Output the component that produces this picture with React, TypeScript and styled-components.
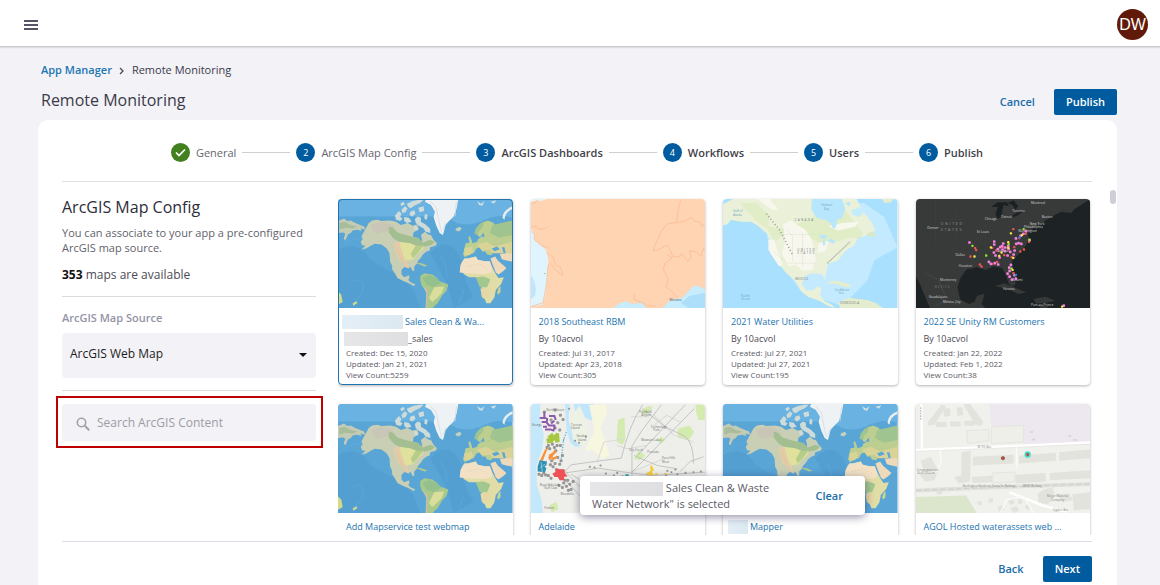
import React from "react";
import styled, { createGlobalStyle, css } from "styled-components";

const GlobalStyle = createGlobalStyle`
  * { box-sizing: border-box; }
  body {
    margin: 0;
    background: #f3f2f7;
    color: #3b3a4a;
    font-family: "Open Sans", "Noto Sans", sans-serif;
    font-size: 11px;
  }
  button, input, select { font: inherit; }
  h1, h2, h3, p { margin: 0; }
`;

const Shell = styled.div`
  display: flex;
  flex-direction: column;
  height: 100vh;
  overflow: hidden;
`;

const TopBar = styled.header`
  display: flex;
  align-items: center;
  justify-content: space-between;
  flex: none;
  height: 47px;
  padding: 2px 12px 0 24px;
  background: #fff;
  border-bottom: 1px solid #c9c9cc;
  box-shadow: 0 1px 1px #dddde2;
`;

const MenuButton = styled.button`
  display: flex;
  padding: 0;
  border: 0;
  background: none;
  color: #1f1d33;
`;

const Avatar = styled.button`
  width: 31px;
  height: 31px;
  padding: 0;
  border: 0;
  border-radius: 50%;
  background: #611a09;
  color: #fff;
  font-family: "Liberation Sans", sans-serif;
  font-size: 16px;
  line-height: 31px;
`;

const PageHead = styled.div`
  display: flex;
  align-items: flex-end;
  justify-content: space-between;
  flex: none;
  padding: 15px 43px 5px 41px;
`;

const Breadcrumb = styled.nav`
  display: flex;
  align-items: center;
  gap: 7px;
  line-height: 16px;
  font-weight: 500;
`;

const CrumbLink = styled.a`
  color: #1b76b3;
  font-weight: 600;
  text-decoration: none;
`;

const PageTitle = styled.h1`
  margin: 10px 0 3px;
  font-size: 16px;
  line-height: 24px;
  font-weight: 500;
`;

const Actions = styled.div`
  display: flex;
  align-items: center;
  gap: 18px;
`;

const Button = styled.button<{ $primary?: boolean }>`
  height: 26px;
  padding: 0 11px 1px;
  border: 1px solid transparent;
  border-radius: 2px;
  background: none;
  color: #1b6ea8;
  font-weight: 600;
  ${(p) =>
    p.$primary
      ? css`
          background: #005c9f;
          color: #fff;
        `
      : css`
          padding: 0 0 1px;
        `}
`;

const Panel = styled.main`
  display: flex;
  flex-direction: column;
  flex: 1;
  min-height: 0;
  margin: 0 43px 0 38px;
  padding: 0 25px 0 24px;
  background: #fff;
  border-radius: 10px 10px 0 0;
`;

const Stepper = styled.ol`
  display: flex;
  align-items: center;
  justify-content: center;
  flex: none;
  gap: 6px;
  height: 62px;
  margin: 0;
  padding: 4px 0 0;
  list-style: none;
  border-bottom: 1px solid #dedee3;
`;

const Step = styled.li<{ $strong?: boolean }>`
  display: flex;
  align-items: center;
  gap: 6px;
  color: ${(p) => (p.$strong ? "#3f3f48" : "#66666e")};
  font-weight: ${(p) => (p.$strong ? 600 : 400)};

  &:not(:last-child)::after {
    content: "";
    width: 48px;
    height: 1px;
    background: #cfcfcf;
  }
`;

const Bubble = styled.span<{ $done?: boolean }>`
  display: flex;
  align-items: center;
  justify-content: center;
  width: 19px;
  height: 19px;
  border-radius: 50%;
  background: ${(p) => (p.$done ? "#43801f" : "#005c9f")};
  color: #fff;
  font-size: 9px;
  font-weight: 500;
`;

const Body = styled.div`
  position: relative;
  display: flex;
  flex: 1;
  min-height: 0;
  gap: 22px;
`;

const Sidebar = styled.section`
  flex: none;
  width: 254px;
  padding-top: 13px;
`;

const SideTitle = styled.h2`
  font-size: 16px;
  line-height: 24px;
  font-weight: 500;
  color: #2e2d3a;
`;

const SideText = styled.p`
  margin-top: 6px;
  line-height: 15px;
  color: #63626c;
`;

const Count = styled.p`
  margin-top: 11px;
  font-size: 12px;
  line-height: 18px;
  color: #4c4b55;

  strong { color: #111; font-weight: 700; }
`;

const Rule = styled.hr`
  height: 1px;
  margin: 12px 0;
  border: 0;
  background: #dcdce0;
`;

const FieldLabel = styled.label`
  display: block;
  margin-bottom: 6px;
  line-height: 18px;
  font-weight: 600;
  color: #9493a5;
`;

const SelectBox = styled.div`
  position: relative;

  svg {
    position: absolute;
    top: 20px;
    right: 9px;
    pointer-events: none;
  }
`;

const Select = styled.select`
  display: block;
  width: 100%;
  height: 45px;
  padding: 0 8px 4px;
  border: 0;
  border-radius: 4px;
  appearance: none;
  background: #f3f2f7;
  color: #1d1c22;
  font-size: 12px;
`;

const Highlight = styled.div`
  margin: -7px -7px 0 -6px;
  padding: 6px 5px 5px 4px;
  border: 2px solid #bd0000;
`;

const SearchBox = styled.label`
  display: flex;
  align-items: center;
  gap: 7px;
  height: 37px;
  padding: 0 14px;
  border-radius: 4px;
  background: #f3f2f7;

  svg { margin-top: 3px; flex: none; }
`;

const SearchInput = styled.input`
  flex: 1;
  min-width: 0;
  padding: 0;
  border: 0;
  background: none;
  font-size: 12px;

  &::placeholder { color: #9d9ca4; opacity: 1; }
`;

const Gallery = styled.div`
  flex: 1;
  min-width: 0;
  margin-bottom: 6px;
  padding: 17px 2px 0 0;
  overflow: hidden;
`;

const Grid = styled.div`
  display: grid;
  grid-template-columns: repeat(4, minmax(0, 1fr));
  gap: 19px 18px;
`;

const Card = styled.article<{ $selected?: boolean }>`
  overflow: hidden;
  border-radius: 4px;
  background: #fff;
  box-shadow: 0 1px 3px rgba(0, 0, 0, 0.3);
  outline: ${(p) => (p.$selected ? "1px solid #1f74b0" : "none")};
  outline-offset: -1px;

  > svg { display: block; width: 100%; height: 109px; }
`;

const CardText = styled.div`
  min-height: 77px;
  padding: 5px 8px 4px;
`;

const CardTitle = styled.h3`
  display: flex;
  align-items: center;
  gap: 2px;
  font-size: 9px;
  line-height: 17px;
  font-weight: 500;
  white-space: nowrap;

  a { color: #2274b0; text-decoration: none; }
`;

const Owner = styled.p`
  display: flex;
  align-items: center;
  font-size: 9px;
  line-height: 17px;
  color: #4b4a55;
`;

const Meta = styled.p`
  font-size: 8px;
  line-height: 11px;
  color: #5c5b66;
`;

const Redaction = styled.span<{ $width: number; $tone: "blue" | "grey"; $bleed?: number }>`
  flex: none;
  display: inline-block;
  width: ${(p) => p.$width}px;
  height: 14px;
  margin-left: ${(p) => -(p.$bleed ?? 0)}px;
  vertical-align: middle;
  background: ${(p) =>
    p.$tone === "blue"
      ? "linear-gradient(90deg, #e4eef6, #dce9f1)"
      : "linear-gradient(90deg, #e6e5e7, #dfdee1)"};
`;

const ScrollThumb = styled.div`
  position: absolute;
  top: 8px;
  right: -24px;
  width: 6px;
  height: 14px;
  border-radius: 3px;
  background: #cfced6;
`;

const Footer = styled.footer`
  display: flex;
  align-items: center;
  justify-content: flex-end;
  flex: none;
  gap: 18px;
  height: 44px;
  padding-top: 11px;
  border-top: 1px solid #dcdce8;
`;

const Toast = styled.div`
  position: absolute;
  right: 227px;
  bottom: 26px;
  display: flex;
  align-items: center;
  justify-content: space-between;
  width: 285px;
  height: 39px;
  padding: 0 21px 0 10px;
  border-radius: 4px;
  background: #fff;
  box-shadow: 0 2px 8px rgba(40, 35, 80, 0.5);
  color: #5b5a66;
  line-height: 15px;
`;

const ToastLine = styled.span`
  display: block;
  padding-left: 2px;
`;

type MapProps = { label: string };

/* Physical world map: oceans, continents with vegetation and desert tones. */
const WorldMap = ({ label }: MapProps) => (
  <svg viewBox="24 28 522 326" preserveAspectRatio="xMidYMid slice" role="img" aria-label={label}>
    <rect x="24" y="28" width="522" height="326" fill="#58a5d6" />
    <path d="M24 28H546V84Q500 70 450 96 390 118 350 80H24Z" fill="#69b2e2" />
    <path d="M24 180Q90 150 120 210 170 240 210 260L250 300 270 354H24Z" fill="#539fd2" />
    <path d="M300 190Q360 130 392 210 400 280 430 320L370 354 350 280Z" fill="#539fd2" />
    <path d="M24 178Q60 140 112 145M60 280Q110 250 96 310L70 340M330 200Q350 220 350 262M400 300L385 345" fill="none" stroke="#70b2df" strokeWidth="2" opacity=".6" />
    <path d="M24 94l18-8 10 8 10-2 14 8 26 10 4 10-14-4 2 8-12-4-14 2-6 8-8 4-8 18-5-6 5-14-6-4-16 2Z" fill="#c3cbb4" />
    <path d="M28 100l16-4 18 10 20 4-14 6-22-2-18 6Z" fill="#a9bd9c" />
    <path d="M116 100l10-8 16-2 12 4 26-2 18 4 14 10 20-6 16 8 12-4 6 14-16 10-2 12 16 8 4 10 8-6-4-16 12-10 10 8 8 2 8 14 10 10-4 8-16 4-2 10-10 4-10 8-6 10-8 8-4 10-8 8 0 14-6-2-4-10-20 0-8 8 0 14 8 8 14-6 2 8-4 6 8 8 14 6-6 4-14-8-20-8-14-8-8-14-8-12 0-10-6-12-2-26-8-14-16-12-20-2-12 6-14 8-14 4 12-12-10-2-4-10 6-8-4-8Z" fill="#c9cfb4" />
    <path d="M124 104l30-8 28 6 14 14-6 14-24-4-26 6-12-10Z" fill="#c9c6b8" />
    <path d="M176 110l12 4 14 14 32 10 30 6 14 14 22-8 14 6-12 10-30 6-40-10-22-4-20-12-14-18Z" fill="#a3bf92" />
    <path d="M206 156l34 4 24 10 16-2-2 10-18 16-10 14-20 4-16 4-4-20-8-20Z" fill="#dfe19c" />
    <path d="M256 168l24 0-18 22-14 16-6-14Z" fill="#b5cd88" />
    <path d="M190 158l18-2 4 18 8 24 10 20 8 18-8-2-14-18-14-12-8-24Z" fill="#e3cba8" />
    <path d="M194 78l12-14 8 8-4 10 8 4-8 8-12-4Z M214 60l10-10 8 6-6 12-10 2Z M230 42l18-8 20-4 12 0-10 10-18 8-10 8-8-4Z M240 66l12-4 4 10-10 8-8-4Z M254 88l8-8 10 4 0 12 14 8 14 14 0 12-14-4-6-10-18-10-6-8Z M264 54l16-4 2 14-14 4Z M284 72l8 4-2 14-8-4Z M222 82l14 2 8 12-14 4-8-6Z M250 108l10 2 4 12-12-2Z M210 42l10-6 4 8-10 6Z" fill="#cfdbd8" />
    <path d="M288 28h96l-5 28-9 24-16 16-8 10-8 30-10-6-10-22-8-26 4-16-12-20-18-10Z" fill="#eef2f5" />
    <path d="M300 34l18 20 8 40 8 34M378 36l-4 44M346 98l-7 22" stroke="#d3dde2" strokeWidth="3" fill="none" opacity=".8" />
    <path d="M376 116l12-5 6 6-8 8-10-3Z" fill="#c4cec1" />
    <path d="M254 218l20 2 18 8-10 2-14-6Z" fill="#b5c98c" />
    <path d="M270 258l12-8 24 4 16 12 6 8 26 10-6 20-12 12-14 24-10 8-6 10h-18l0-52-14-20-4-14Z" fill="#a9c98c" />
    <path d="M276 264l22-9 24 12 10 12-22 12-20-6Z" fill="#93c08c" />
    <path d="M312 292l30-2-8 20-14 14-14 12-10-12Z" fill="#d9de9a" />
    <path d="M280 290l12 10-2 54-4 0 2-44Z" fill="#d1bbb0" />
    <path d="M24 304l10 10 4 22-14 8Z M68 340l12-6 2 5-12 8Z" fill="#d6da88" />
    <path d="M404 168l2-8 12-2-4-14 4-6 6 14 2 8 14-4 4-10 8-2-10-6-4-10 4-14 16-16 14-6 16 6 8 10-6 8 14-4 6-8 16 0 24-6V200l-22-4-14-8-6-8-18 6-8 10-12-2-6-10-8 2-6-14-12 4-8 14-14 4-12 8-6-8Z" fill="#bccf90" />
    <path d="M432 132l4-16 12-14 14-8-6 20-10 8-4 14Z M486 106l60-14v44l-40 8-28-14Z" fill="#a0c48f" />
    <path d="M402 176l22-6 4 14-10 12-16 0Z M440 164l28-8 26 14 52-14v44l-28-10-30 0-10-10-24 2Z" fill="#d9d398" />
    <path d="M484 176l16-6 8 8-16 6ZM450 140l10-12 2 14ZM514 172l8 0 4 18-6 2Z" fill="#5ba7d7" />
    <path d="M402 206l10 0 24-6 6 10 20 4 16 0 8 20 10 18 8 12 16-2-8 20-16 18-4 22-12 18-12 0-8-20-6-24-2-18-10-6-4-10-22 0-16-10-8-14 2-20Z" fill="#e0dda6" />
    <path d="M402 206l10 0 24-6 6 10 20 4 16 0 8 22-2 12-22 4-52-2-22-2 2-22Z" fill="#f2e1c4" />
    <path d="M480 206l14-6 8 12 26 22-10 10-14 10-8-6-8-20Z M508 192l38-2v26l-18-4-14-4Z" fill="#efd9bb" />
    <path d="M436 262l24-2 20 8-10 24-22 0Z" fill="#a3c88f" />
    <path d="M450 296l32-2-8 20-12 14-8-8Z" fill="#e6d8a5" />
    <path d="M504 294l6-6 0 18-6 8-4-6Z" fill="#c9d390" />
    <path d="M516 84q2-24 30-34v8q-22 8-24 32Z" fill="#e5edef" />
    <path d="M440 34l12 8 10-8-6 14-10-2Z M480 36l18-4-8 10Z" fill="#d2dfdf" />
    <path d="M186 116l14 16M200 176l10 26 14 22M410 230l34-8 26 14M472 138l46-10M480 164l40-6M452 258l10 18" fill="none" stroke="#b6a27c" strokeWidth="2" strokeDasharray="3 7" opacity=".5" />
  </svg>
);

const SoutheastMap = ({ label }: MapProps) => (
  <svg viewBox="32 28 522 326" preserveAspectRatio="xMidYMid slice" role="img" aria-label={label}>
    <rect x="32" y="28" width="522" height="326" fill="#fed4b2" />
    <path d="M32 116l10 18 2 18 20 16 14 14 6 30-4 60-6 50-8 22-34 6Z" fill="#dff4fd" />
    <path d="M32 255q20 30 12 62l-12 10Z" fill="#bfe6fb" />
    <path d="M32 28h48l-18 6-12-2-18 6Z" fill="#e3f4fa" />
    <path d="M276 354l22-14 20-6 18 8 26-4 12 12v4Z" fill="#c8ecfc" />
    <path d="M426 354l20-22 40-10 24-26 14-10 30 12v56Z" fill="#c6ecfd" />
    <path d="M480 340l26-22 48-10v46h-50Z" fill="#addffa" />
    <g fill="none" stroke="#fbb78d" strokeWidth="2">
      <path d="M32 112l14-2 10 8 14 0 12-8M32 124l10 10 0 16 22 18 18 6M78 188l20 14 8 24 14 6 8 24M90 220l18 22 20 16M84 222l-6 60-10 56-36 12" />
      <path d="M480 30l-8 32-4 36-28 4-18 22-16 36-6 14-2 10 18-6 22-12 10 14 8 20 18 2 8-10 20 22 8-12-4-20 20 4 14 14 8-24 10 4M468 100l30-8 14-10 8 12 16 2 8 14 8-8M438 194l16 10-20 16-6 18 10 22 4 8-6 22 26 22 10 14" />
      <path d="M342 312l-2 14 12 8 14 4 14 10 24 0M32 40l12 0 6-8" />
    </g>
    <g fill="#4c5560" fontSize="10">
      <text x="72" y="254">•</text>
      <text x="446" y="332">Monaco</text>
    </g>
  </svg>
);

const NorthAmericaMap = ({ label }: MapProps) => (
  <svg viewBox="24 28 522 326" preserveAspectRatio="xMidYMid slice" role="img" aria-label={label}>
    <rect x="24" y="28" width="522" height="326" fill="#a9e0fe" />
    <path d="M24 62l70-16 56 56 16 90 60 70 40 50 100 30 30-10 60-60 20-60 70-40-40-90-60-42H24Z" fill="#c3eafe" />
    <path d="M24 44l30-16h370l16 34 28 34 12 26-34 18-18 2-12 26-26 14-22 30-30 10-8 38 0 10-10-18-28-2-24 8-8 26 14 18 22-2 10-12 12 8-4 18 14 20 22 10 8 10-18-6-28-16-34-12-22-18-18-32-24-20-28-34-16-24-4-36-10-24-28-24-20-12-30 0-30-6-12 14-28 6Z" fill="#eaf1d8" />
    <path d="M74 40l50 0 40 38-6 30 30 10 54-14 50-20 20-40 60-4 40 50 30 40-10 20-20-8-44 12-60 4-70-40-40 20-20 20-20-40-30-20Z" fill="#dcebc2" opacity=".75" />
    <path d="M204 104l22-12 44 28 20 30 12 60-10 30-30 2-22-18-20 6-20-40 10-30Z M160 150l18 0 10 36 14 38-10 6-20-30-12-20Z M310 160l30-6-10 30-24 6Z" fill="#f8f7ee" />
    <path d="M128 28l40 30 24 6-28-36Z M340 110l40-10 50-4-12 16-50 10Z" fill="#f8f7ed" />
    <path d="M290 28h90l10 30-12 30-12 0-4 24-8 6-8-18-12-8-30-8-16-24Z" fill="#b8e7fd" />
    <path d="M408 62l26-10 10 18-12 12-20-6Z" fill="#c4edfb" />
    <path d="M308 142l18-8 14 6-12 4 2 22-8 0 2-20Z M336 152l16 10 10-8-16-8Z M388 40l18-4-4 14Z" fill="#b9e7fa" />
    <path d="M334 276l30-4 38 10 6 8-20 2-24-10-28-2Z M376 354l-8-12 14-12 20-6 54 6 26 10 20 14Z M498 28l10 12 18-2 8-10Z" fill="#e5edcf" />
    <path d="M452 132l18-6 10 10-12 6Z" fill="#d9e8bd" />
    <path d="M172 134h150M212 116l20 24 0 76M262 130v100M176 186l40 34h90" stroke="#dbe1d0" strokeWidth="1.5" fill="none" />
    <g fill="#6e787c" fontSize="9" letterSpacing="4">
      <text x="238" y="93">CANADA</text>
      <text x="246" y="183">UNITED</text>
      <text x="246" y="194">STATES</text>
      <text x="240" y="270" letterSpacing="1">MEXICO</text>
      <text x="374" y="341" letterSpacing="1">VENEZUELA</text>
    </g>
    <g fill="#6ba5c5" fontSize="9">
      <text x="318" y="50">Hudson</text><text x="326" y="60">Bay</text>
      <text x="54" y="68">Gulf of</text><text x="54" y="78">Alaska</text>
      <text x="358" y="302">Caribbean</text><text x="370" y="311">Sea</text>
      <text x="78" y="320">Pacific</text><text x="78" y="330">Ocean</text>
    </g>
    <g stroke="#9da09a" strokeWidth="5" strokeDasharray="3 7" fill="none">
      <path d="M154 72L194 122 232 194" />
      <path d="M336 220L404 156" strokeDasharray="2 2" strokeWidth="4" />
    </g>
  </svg>
);

const pinkDots = [
  [192, 188], [266, 185], [266, 194], [293, 191], [284, 202], [291, 209], [277, 208], [265, 218], [270, 227], [282, 233],
  [299, 203], [308, 199], [314, 216], [306, 227], [327, 212], [324, 224], [332, 192], [339, 190], [347, 192], [331, 176],
  [345, 168], [353, 162], [361, 154], [372, 181], [250, 246], [256, 252], [268, 250], [278, 254], [316, 255], [311, 263],
  [306, 281], [312, 290], [319, 299], [327, 286], [331, 296], [474, 377], [289, 199], [298, 214], [312, 273], [309, 207],
];
const redDots = [
  [323, 148], [209, 205], [212, 211], [195, 230], [223, 254], [228, 260], [260, 204], [292, 201], [344, 215], [355, 209],
  [260, 252], [275, 246], [318, 232], [341, 175], [360, 162], [370, 186], [324, 280], [296, 226], [326, 202], [272, 212],
];
const yellowDots = [
  [316, 161], [207, 230], [256, 203], [308, 204], [281, 228], [321, 270], [323, 234], [349, 166], [288, 218], [469, 380], [308, 187],
];
const greenDots = [[201, 198], [242, 227], [354, 148], [309, 193], [371, 180], [318, 266]];
const blueDots = [[342, 173], [331, 285]];

const darkLabels: Array<[number, number, string]> = [
  [66, 147, "Denver"], [214, 160, "St Louis"], [238, 121, "Chicago"], [287, 115, "Detroit"], [320, 97, "Toronto"],
  [376, 73, "Montreal"], [408, 114, "Boston"], [372, 135, "New York"], [354, 145, "Philadelphia"], [338, 157, "Washington"],
  [150, 228, "Dallas"], [160, 261, "Houston"], [104, 304, "Monterrey"], [70, 355, "Guadalajara"], [113, 368, "Mexico City"],
  [292, 331, "Havana"], [376, 377, "Port-au-Prince"], [276, 217, "Atlanta"], [322, 303, "Miami"],
];

const Dots = ({ points, color, size = 7 }: { points: number[][]; color: string; size?: number }) => (
  <g fill={color}>
    {points.map(([x, y]) => (
      <rect key={`${x}-${y}`} x={x - size / 2} y={y - size / 2} width={size} height={size} rx={size / 3} />
    ))}
  </g>
);

const CustomersMap = ({ label }: MapProps) => (
  <svg viewBox="32 58 522 326" preserveAspectRatio="xMidYMid slice" role="img" aria-label={label}>
    <rect x="32" y="58" width="522" height="326" fill="#383a3a" />
    <path d="M554 58v326H240l-12-12 8-24-16-4-8 20-22 8-26-14-8-36 10-30 18-24 30-6 26 8 24-10 26 4 10 20 10 28 10 8 10-8-8-44-4-22 20-22 22-26 10-20-4-14 16-20 28-16 28-18 28-14 30 4 10-12Z" fill="#1d2224" />
    <path d="M32 290l12 22 16 40 14 32H32Z" fill="#1d2224" />
    <path d="M268 318l28-8 30 12 36 16-24 4-30-14Z M384 356l36-6 28 12-34 8-24 0Z M398 376l30 2-4 6-20 0Z M214 348l24-8-6 14-16 30-14-4Z" fill="#363938" />
    <path d="M256 82l20-14 28 0 6 12-16-4-8 36-10 6-6-14 6-22Z M306 70l18-8 14 18-8 10-10-14Z M316 110l28-16 12-2-18 14-20 8Z" fill="#1b2022" />
    <path d="M60 120h110M90 58v140M150 70v120M200 180v90M240 130v110M32 230l120-20 100 30M320 120l40 10M32 180h200" stroke="#424545" fill="none" />
    <path d="M60 280l40 20 20 50M90 380l30-20 40 14" stroke="#4a4c4c" fill="none" strokeWidth="2" />
    <g fill="#929494" fontSize="11" letterSpacing="5">
      <text x="106" y="135">UNITED</text>
      <text x="106" y="154">STATES</text>
      <text x="88" y="324" fontSize="8" letterSpacing="3" opacity=".7">MEXICO</text>
    </g>
    <g fill="#d4d5d5" fontSize="10">
      {darkLabels.map(([x, y, t]) => (
        <text key={t} x={x} y={y}>{t}</text>
      ))}
    </g>
    <Dots points={redDots} color="#ee5551" />
    <Dots points={pinkDots} color="#f581dc" size={8} />
    <Dots points={yellowDots} color="#f8e843" />
    <Dots points={greenDots} color="#93e52c" />
    <Dots points={blueDots} color="#237fe0" />
  </svg>
);

const greyAssets = [
  [72, 50], [104, 44], [120, 60], [128, 72], [92, 74], [104, 98], [112, 82], [118, 104], [84, 150], [96, 146], [102, 156],
  [88, 160], [106, 166], [120, 150], [126, 180], [112, 186], [118, 206], [108, 222], [98, 214], [90, 208], [56, 236], [70, 232],
  [84, 240], [92, 248], [128, 226], [130, 262], [138, 272], [148, 266], [142, 254], [152, 282], [126, 276], [158, 258],
  [64, 240], [76, 238], [94, 196], [104, 204], [122, 196], [116, 270], [144, 284], [134, 254], [110, 150], [80, 156],
];
const farAssets = [
  [208, 214], [240, 210], [256, 234], [290, 232], [306, 242], [380, 236], [440, 226], [452, 230], [464, 222], [470, 236],
  [494, 232], [518, 230], [540, 228], [436, 238], [176, 142], [196, 124], [164, 136], [146, 40], [222, 216], [280, 240],
];

const AdelaideMap = ({ label }: MapProps) => (
  <svg viewBox="32 26 522 326" preserveAspectRatio="xMidYMid slice" role="img" aria-label={label}>
    <rect x="32" y="26" width="522" height="326" fill="#eeeeea" />
    <path d="M32 26h28l-2 44 12 50-4 40-18 50 2 60 14 44 4 38H32Z" fill="#c3e7fb" />
    <path d="M134 26h14l-4 50 8 20 22-20 16 6 10 24-16 46-20 2-14-12-12-40Z M160 26h60l14 30-20 20-30-14-16 12Z" fill="#bfe6fb" />
    <path d="M148 70l30-40 20 48 8 60-24 14-24-20Z" fill="#edf2e5" />
    <path d="M206 28h52v30l-18 40 28 80-22 14-30-28-24 2 30-60Z" fill="#f7f7df" />
    <path d="M292 74l20-8 2 66-8 16-18-10Z M366 42l18-10 12 4-14 20-18 0Z M524 28h28v46h-20l-6-24Z M470 100l36-10 14 20-14 22-34-4Z M354 166l20 14-16 14-18-4Z M88 328l20-10 6 22-20 10Z M408 134l14-10 12 10-14 10Z" fill="#d3ebaf" />
    <path d="M330 64h54M290 150l30 10 60-10M398 90l40-30 40 20M330 230l50-20 50-20M400 60l60 60 60 20M230 200l20-60 60-10" fill="none" stroke="#dadad6" strokeWidth="3" />
    <g fill="none" stroke="#b0b0b0" strokeWidth="2">
      <path d="M366 28q-40 60-64 160l-80 10-70 10-18 20 78 80" />
      <path d="M494 28L350 180M520 40L334 230M422 28l-60 80-28 44v90M364 40l70 54 60 30q24 20 24 80M134 232l100-14 80 12 80 10 158-10M340 180l70 30 60 10M548 184l-40 14-30 30" />
      <path d="M130 250q60 60 90 100M152 236l26 16" />
    </g>
    <path d="M130 130l-8 66M138 110l-10 28" stroke="#65b8dd" strokeWidth="4" strokeDasharray="4 4" />
    <Dots points={greyAssets} color="#979797" size={9} />
    <Dots points={farAssets} color="#979797" size={6} />
    <g fill="none" stroke="#8e58ab" strokeWidth="6">
      <path d="M58 68h20M64 80h14l8 10h16v12M72 50v16M86 62h16l4 12M68 94h12M74 102h16l12 4M80 78v-10" />
      <path d="M92 84l10-8" />
    </g>
    <path d="M80 124l16-12 4 8 8-8 8 2 2 26-12 2-4-8-6 8-16 2-2-14 8-2Z" fill="#a5c840" />
    <path d="M74 162l8-4-14 36-10 4Z M86 178l10-6 8-10 4 8-12 12 4 4 10-6 0 8-12 6-4-6-8 6-2-8Z" fill="#fa9139" />
    <path d="M58 194l22 4-2 12-6 2 6 6-4 12-22-2 0-16Z" fill="#2f91b5" />
    <path d="M62 200l4 30M74 206l-14 10" stroke="#b8dbe6" strokeWidth="2" />
    <path d="M96 234l8-4 4-10 24 2 2 12 8 8-12 2 2 10-14 0-6-10-10 0Z" fill="#ee5257" />
    <path d="M378 232l12-6-2-14 6-2 6 14-6 4 4 10-12 2-8-2Z M404 232l6 0 0 6-8 0Z M430 232l8 0-2 6-6-2Z" fill="#f8cd3a" />
    <path d="M314 236h10v10h-10Z" fill="#20aa9e" />
    <g fill="#6f6f6f" fontSize="9">
      <text x="34" y="91">Grange</text><text x="78" y="46">North Haven</text><text x="152" y="92">Torrens</text><text x="152" y="102">Island</text>
      <text x="168" y="126">Garden</text><text x="172" y="136">Island</text><text x="356" y="53">Parafield</text><text x="362" y="63">Airport</text>
      <text x="390" y="98">Technology</text><text x="398" y="108">Park</text><text x="362" y="137">Mawson Lakes</text><text x="380" y="172">Pooraka</text>
      <text x="326" y="166">Dry Creek</text><text x="424" y="192">Para Hills</text><text x="424" y="202">West</text>
      <text x="58" y="270">Royal Adelaide</text><text x="72" y="280">Golf Club</text><text x="120" y="298">Woodville</text><text x="72" y="340">Findon</text>
    </g>
  </svg>
);

const StreetMap = ({ label }: MapProps) => (
  <svg viewBox="48 26 522 326" preserveAspectRatio="xMidYMid slice" role="img" aria-label={label}>
    <rect x="48" y="26" width="522" height="326" fill="#f0f0ec" />
    <path d="M266 26h304v120l-200 8v-64l-96 4Z" fill="#ede8ef" />
    <path d="M48 304l150-4 32 52H48Z" fill="#dce6cc" />
    <g fill="#e3e3dd">
      <path d="M84 80l40-52 14 4-34 56-20 2Z M190 28l18-4 42 56-8 12-16-4Z" />
      <rect x="108" y="80" width="32" height="15" rx="4" /><rect x="150" y="78" width="32" height="15" rx="4" /><rect x="192" y="76" width="32" height="15" rx="4" />
      <path d="M130 40l20-2 0 24-18 2Z M170 36l16 0 4 22-18 4Z M286 114h24v16h-24Z" />
      <path d="M184 170l28-4-2 92-34 6-14-20 22-4Z M218 184l122-6v26l-122 6Z M356 180l110-8v24l-110 8Z M476 170l94-8v26l-94 8Z M216 244l60-4v20l-60 2Z M346 238l90-6v26l-90 6Z M448 232l122-8v24l-122 6Z" />
      <path d="M62 196l30-12 22 40-10 30-28 4-20-24 16-8Z M412 294l20-14 26-4 4 30-20 20-28-6Z M466 296l40-2 12 20-30 4Z M516 296l54-6v50l-50 4Z M110 286h16v10h-16Z M232 316l14 2-2 12-12-4Z M264 310l14-4 0 12-12 4Z M292 336l14-8 6 14-14 8Z M324 316l14-6 6 12-14 6Z M354 310l14 4-4 12-12-4Z M376 328l14 2-4 14-12-6Z M330 338l18-6 10 12-18 8Z" />
    </g>
    <path d="M274 94l96-4v50l-96 4Z M200 106l66-4 0 34-64 8Z M278 232l66-2v28l-66 4Z" fill="#efefea" stroke="#dfdfd8" strokeWidth="2" />
    <path d="M48 163l300-12 222-10" stroke="#fff" strokeWidth="7" fill="none" />
    <path d="M48 168l300-12 222-10" stroke="#dadad5" strokeWidth="1" fill="none" />
    <path d="M64 26l2 134M328 290l100 40 70 18" stroke="#fff" strokeWidth="7" fill="none" />
    <path d="M348 152l2 66M48 230h60l16-30-4-38M300 352l20-40 50-10 30 50" stroke="#fafaf8" strokeWidth="4" fill="none" />
    <path d="M48 285l240-10 282-10" stroke="#e0e0dc" strokeWidth="12" fill="none" />
    <path d="M48 285l240-10 282-10" stroke="#cecdca" strokeWidth="3" strokeDasharray="16 8" fill="none" />
    <path d="M390 110h8M394 132h10M504 122h8M518 134h12" stroke="#dad6dc" strokeWidth="6" />
    <path d="M62 36v38" stroke="#c4c3c3" strokeWidth="4" strokeDasharray="5 3" />
    <g fill="#898984" fontSize="9">
      <text x="232" y="159">W 7th Ave</text><text x="50" y="226">Congregational</text><text x="52" y="236">Beth Shalom</text>
      <text x="188" y="275">Burlington Northern Santa Fe Railway</text><text x="368" y="275">BNSF Railway</text>
      <text x="440" y="305">Mayer Material</text><text x="452" y="315">Company</text><text x="458" y="347">Ogden Ave</text>
    </g>
    <circle cx="308" cy="188" r="5" fill="#d84728" stroke="#5f5a58" strokeWidth="2" />
    <circle cx="382" cy="177" r="7" fill="#dd5737" stroke="#43ddd0" strokeWidth="5" />
    <circle cx="382" cy="177" r="4" fill="#a35642" />
  </svg>
);

type MapItem = {
  Map: (p: MapProps) => React.ReactElement;
  title: string;
  details?: { owner: string; created: string; updated: string; views: number };
  selected?: boolean;
  titleMask?: number;
  ownerMask?: number;
};

const maps: MapItem[] = [
  {
    Map: WorldMap,
    title: "Sales Clean & Wa...",
    details: { owner: "_sales", created: "Dec 15, 2020", updated: "Jan 21, 2021", views: 5259 },
    selected: true,
    titleMask: 61,
    ownerMask: 64,
  },
  {
    Map: SoutheastMap,
    title: "2018 Southeast RBM",
    details: { owner: "By 10acvol", created: "Jul 31, 2017", updated: "Apr 23, 2018", views: 305 },
  },
  {
    Map: NorthAmericaMap,
    title: "2021 Water Utilities",
    details: { owner: "By 10acvol", created: "Jul 27, 2021", updated: "Jul 27, 2021", views: 195 },
  },
  {
    Map: CustomersMap,
    title: "2022 SE Unity RM Customers",
    details: { owner: "By 10acvol", created: "Jan 22, 2022", updated: "Feb 1, 2022", views: 38 },
  },
  { Map: WorldMap, title: "Add Mapservice test webmap" },
  { Map: AdelaideMap, title: "Adelaide" },
  { Map: WorldMap, title: "Mapper", titleMask: 20 },
  { Map: StreetMap, title: "AGOL Hosted waterassets web ..." },
];

const steps = [
  { name: "General", done: true },
  { name: "ArcGIS Map Config" },
  { name: "ArcGIS Dashboards", strong: true },
  { name: "Workflows", strong: true },
  { name: "Users", strong: true },
  { name: "Publish", strong: true },
];

const MapCard = ({ item }: { item: MapItem }) => (
  <Card $selected={item.selected}>
    <item.Map label={item.title} />
    <CardText>
      <CardTitle>
        {item.titleMask && <Redaction $width={item.titleMask} $tone="blue" $bleed={item.selected ? 4 : 3} />}
        <a href="#map">{item.title}</a>
      </CardTitle>
      {item.details && (
        <>
          <Owner>
            {item.ownerMask && <Redaction $width={item.ownerMask} $tone="grey" $bleed={2} />}
            {item.details.owner}
          </Owner>
          <Meta>Created: {item.details.created}</Meta>
          <Meta>Updated: {item.details.updated}</Meta>
          <Meta>View Count:{item.details.views}</Meta>
        </>
      )}
    </CardText>
  </Card>
);

export default function App() {
  return (
    <>
      <GlobalStyle />
      <Shell>
        <TopBar>
          <MenuButton aria-label="Menu">
            <svg width="14" height="11" viewBox="0 0 14 11">
              <path d="M0 2h14M0 6h14M0 10h14" stroke="currentColor" strokeWidth="1.5" />
            </svg>
          </MenuButton>
          <Avatar aria-label="Account">DW</Avatar>
        </TopBar>

        <PageHead>
          <div>
            <Breadcrumb aria-label="Breadcrumb">
              <CrumbLink href="#apps">App Manager</CrumbLink>
              <svg width="6" height="12" viewBox="0 0 6 12">
                <path d="M1 4l3 3-3 3" fill="none" stroke="#4a4955" strokeWidth="1.3" />
              </svg>
              <span>Remote Monitoring</span>
            </Breadcrumb>
            <PageTitle>Remote Monitoring</PageTitle>
          </div>
          <Actions>
            <Button>Cancel</Button>
            <Button $primary>Publish</Button>
          </Actions>
        </PageHead>

        <Panel>
          <Stepper>
            {steps.map((s, i) => (
              <Step key={s.name} $strong={s.strong}>
                <Bubble $done={s.done}>
                  {s.done ? (
                    <svg width="11" height="9" viewBox="0 0 11 9">
                      <path d="M1 4.5l3 3 6-6" fill="none" stroke="#fff" strokeWidth="1.7" />
                    </svg>
                  ) : (
                    i + 1
                  )}
                </Bubble>
                {s.name}
              </Step>
            ))}
          </Stepper>

          <Body>
            <Sidebar>
              <SideTitle>ArcGIS Map Config</SideTitle>
              <SideText>You can associate to your app a pre-configured ArcGIS map source.</SideText>
              <Count>
                <strong>353</strong> maps are available
              </Count>
              <Rule />
              <FieldLabel htmlFor="source">ArcGIS Map Source</FieldLabel>
              <SelectBox>
                <Select id="source" defaultValue="web">
                  <option value="web">ArcGIS Web Map</option>
                </Select>
                <svg width="8" height="4" viewBox="0 0 8 4">
                  <path d="M0 0h8L4 4Z" fill="#111" />
                </svg>
              </SelectBox>
              <Rule />
              <Highlight>
                <SearchBox>
                  <svg width="14" height="14" viewBox="0 0 14 14" fill="none" stroke="#a2a1a8" strokeWidth="1.6">
                    <circle cx="5.5" cy="5.5" r="4.2" />
                    <path d="M8.8 8.8l4.4 4.4" strokeWidth="2" />
                  </svg>
                  <SearchInput type="text" aria-label="Search ArcGIS Content" placeholder="Search ArcGIS Content" />
                </SearchBox>
              </Highlight>
            </Sidebar>

            <Gallery>
              <Grid>
                {maps.map((m) => (
                  <MapCard key={m.title} item={m} />
                ))}
              </Grid>
            </Gallery>
            <ScrollThumb />
            <Toast role="status">
              <div>
                <div>
                  <Redaction $width={73} $tone="grey" /> Sales Clean &amp; Waste
                </div>
                <ToastLine>Water Network" is selected</ToastLine>
              </div>
              <Button>Clear</Button>
            </Toast>
          </Body>

          <Footer>
            <Button>Back</Button>
            <Button $primary>Next</Button>
          </Footer>
        </Panel>
      </Shell>
    </>
  );
}
